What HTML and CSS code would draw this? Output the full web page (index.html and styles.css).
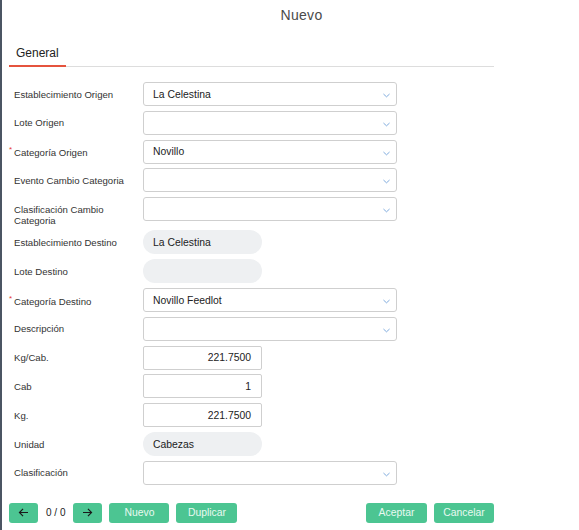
FILE: index.html
```html
<!DOCTYPE html>
<html>
<head>
<meta charset="utf-8">
<link rel="stylesheet" href="styles.css">
</head>
<body>
<div class="page">
  <div class="title">Nuevo</div>
  <div class="tabs">
    <div class="tab active">General</div>
  </div>
  <div class="form">
    <div class="row">
      <label class="lbl">Establecimiento Origen</label>
      <div class="select"><span class="val">La Celestina</span><svg class="chev" viewBox="0 0 8 5"><polyline points="0.5,0.8 4,4 7.5,0.8"/></svg></div>
    </div>
    <div class="row">
      <label class="lbl">Lote Origen</label>
      <div class="select"><span class="val"></span><svg class="chev" viewBox="0 0 8 5"><polyline points="0.5,0.8 4,4 7.5,0.8"/></svg></div>
    </div>
    <div class="row">
      <label class="lbl"><span class="req">*</span>Categoría Origen</label>
      <div class="select"><span class="val">Novillo</span><svg class="chev" viewBox="0 0 8 5"><polyline points="0.5,0.8 4,4 7.5,0.8"/></svg></div>
    </div>
    <div class="row">
      <label class="lbl">Evento Cambio Categoria</label>
      <div class="select"><span class="val"></span><svg class="chev" viewBox="0 0 8 5"><polyline points="0.5,0.8 4,4 7.5,0.8"/></svg></div>
    </div>
    <div class="row">
      <label class="lbl">Clasificación Cambio Categoria</label>
      <div class="select"><span class="val"></span><svg class="chev" viewBox="0 0 8 5"><polyline points="0.5,0.8 4,4 7.5,0.8"/></svg></div>
    </div>
    <div class="row">
      <label class="lbl">Establecimiento Destino</label>
      <div class="pill">La Celestina</div>
    </div>
    <div class="row">
      <label class="lbl">Lote Destino</label>
      <div class="pill"></div>
    </div>
    <div class="row">
      <label class="lbl"><span class="req">*</span>Categoría Destino</label>
      <div class="select"><span class="val">Novillo Feedlot</span><svg class="chev" viewBox="0 0 8 5"><polyline points="0.5,0.8 4,4 7.5,0.8"/></svg></div>
    </div>
    <div class="row">
      <label class="lbl">Descripción</label>
      <div class="select"><span class="val"></span><svg class="chev" viewBox="0 0 8 5"><polyline points="0.5,0.8 4,4 7.5,0.8"/></svg></div>
    </div>
    <div class="row">
      <label class="lbl">Kg/Cab.</label>
      <div class="num">221.7500</div>
    </div>
    <div class="row">
      <label class="lbl">Cab</label>
      <div class="num">1</div>
    </div>
    <div class="row">
      <label class="lbl">Kg.</label>
      <div class="num">221.7500</div>
    </div>
    <div class="row">
      <label class="lbl">Unidad</label>
      <div class="pill">Cabezas</div>
    </div>
    <div class="row">
      <label class="lbl">Clasificación</label>
      <div class="select"><span class="val"></span><svg class="chev" viewBox="0 0 8 5"><polyline points="0.5,0.8 4,4 7.5,0.8"/></svg></div>
    </div>
  </div>
  <div class="footer">
    <button class="btn arrow"><svg viewBox="0 0 12 10"><path d="M11 5H1.5M5.5 1L1.5 5L5.5 9"/></svg></button>
    <span class="count">0 / 0</span>
    <button class="btn arrow"><svg viewBox="0 0 12 10"><path d="M1 5H10.5M6.5 1L10.5 5L6.5 9"/></svg></button>
    <button class="btn text w60">Nuevo</button>
    <button class="btn text">Duplicar</button>
    <div class="spacer"></div>
    <button class="btn text">Aceptar</button>
    <button class="btn text w60">Cancelar</button>
  </div>
</div>
</body>
</html>
```

FILE: styles.css
```css
html, body {
  margin: 0;
  padding: 0;
  background: #fff;
}
.page {
  min-height: 530px;
  border-left: 2px solid #4b5563;
  box-sizing: border-box;
  font-family: "Liberation Sans", Arial, sans-serif;
  color: #333;
}
.title {
  text-align: center;
  padding-left: 22px;
  padding-top: 7px;
  font-size: 14px;
  line-height: 17px;
  color: #4a4a4a;
  letter-spacing: 0.3px;
}
.tabs {
  margin: 18px 0 0 7px;
  width: 485px;
  border-bottom: 1px solid #ddd;
  display: flex;
}
.tab {
  font-size: 12px;
  line-height: 14px;
  padding: 4px 7px 5px 7px;
  color: #222;
}
.tab.active {
  border-bottom: 2px solid #e5533d;
  margin-bottom: -1px;
}
.form {
  margin: 15px 0 0 7px;
  width: 485px;
  display: flex;
  flex-direction: column;
  gap: 4.8px;
}
.row {
  display: grid;
  grid-template-columns: 134px 1fr;
  align-items: start;
}
.lbl {
  font-size: 9.6px;
  line-height: 11px;
  padding: 6.5px 0 0 5px;
  color: #333;
}
.req {
  display: inline-block;
  width: 5px;
  margin-left: -5px;
  color: #e53935;
  font-size: 8px;
  line-height: 8px;
  vertical-align: 4px;
}
.select, .num, .pill {
  box-sizing: border-box;
  height: 24px;
  font-size: 10.4px;
  color: #222;
  display: flex;
  align-items: center;
}
.select {
  width: 254px;
  border: 1px solid #cfcfcf;
  border-radius: 3px;
  padding: 0 6px 0 9px;
  justify-content: space-between;
}
.chev {
  width: 7px;
  height: 5px;
  margin-top: 3px;
  fill: none;
  stroke: #6d9fd8;
  stroke-width: 1;
}
.num {
  width: 119px;
  border: 1px solid #cfcfcf;
  border-radius: 2px;
  justify-content: flex-end;
  padding-right: 10px;
}
.pill {
  width: 119px;
  background: #eef0f2;
  border-radius: 12px;
  padding-left: 10px;
}
.footer {
  display: flex;
  align-items: center;
  margin: 18px 0 0 7px;
  width: 485px;
  gap: 7px;
}
.btn {
  height: 20px;
  border: none;
  border-radius: 3px;
  background: #4cc592;
  font-family: "Liberation Sans", Arial, sans-serif;
  padding: 0;
  display: flex;
  align-items: center;
  justify-content: center;
}
.btn.arrow {
  width: 29px;
}
.btn.arrow svg {
  width: 11px;
  height: 9px;
  fill: none;
  stroke: #1a1a1a;
  stroke-width: 1.3;
}
.btn.text {
  width: 61px;
  color: #e9f9f1;
  font-size: 10.4px;
}
.btn.text.w60 {
  width: 60px;
}
.count {
  font-size: 10px;
  color: #222;
  margin: 0 1px;
}
.spacer {
  flex: 1;
}
```
